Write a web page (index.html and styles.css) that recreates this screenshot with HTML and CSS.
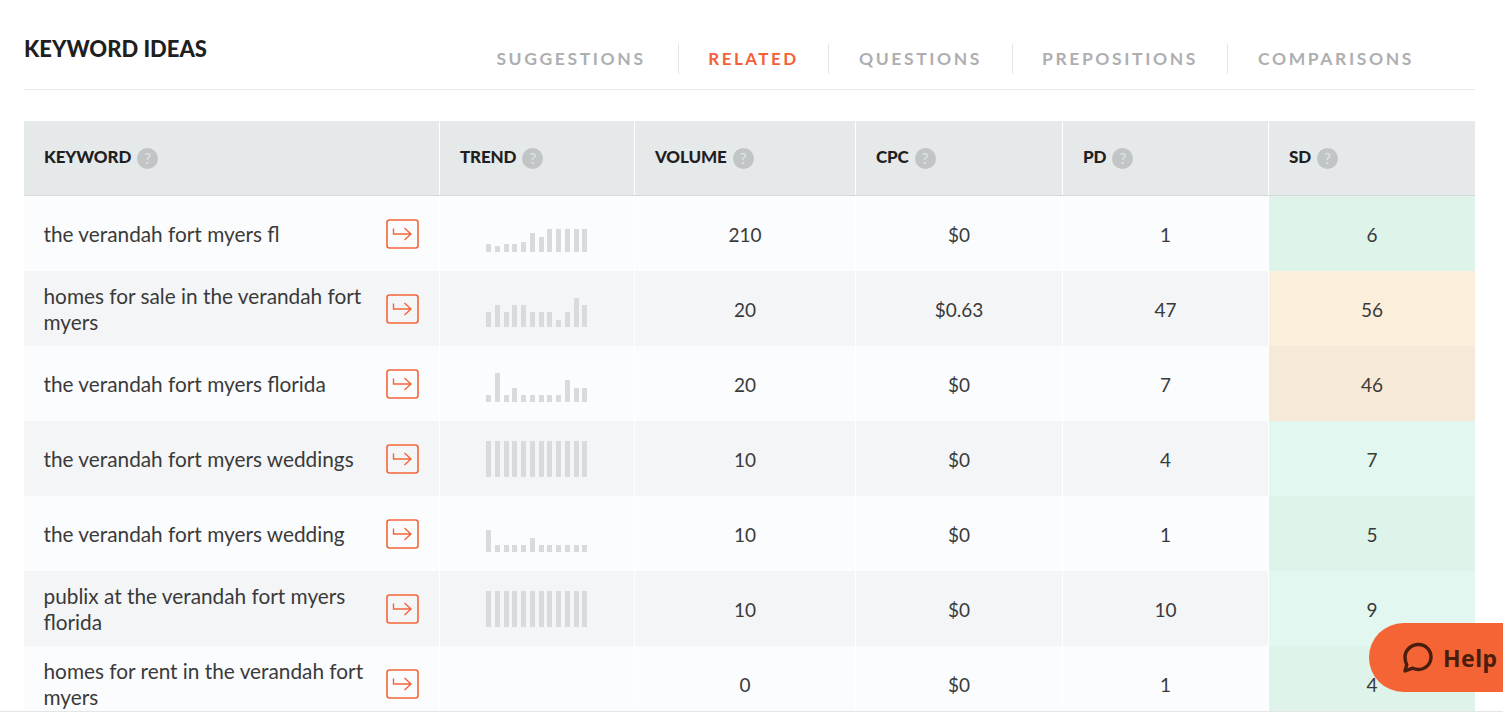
FILE: index.html
```html
<!DOCTYPE html>
<html lang="en">
<head>
<meta charset="utf-8">
<title>Keyword Ideas</title>
<link rel="stylesheet" href="styles.css">
</head>
<body>
<main class="page">
  <header class="top">
    <h1 class="title">KEYWORD IDEAS</h1>
    <nav class="tabs">
      <a class="tab">SUGGESTIONS</a>
      <a class="tab active">RELATED</a>
      <a class="tab">QUESTIONS</a>
      <a class="tab">PREPOSITIONS</a>
      <a class="tab">COMPARISONS</a>
    </nav>
  </header>
  <div class="table">
    <div class="row head">
      <div class="cell kw">KEYWORD <span class="q">?</span></div>
      <div class="cell tr">TREND <span class="q">?</span></div>
      <div class="cell">VOLUME <span class="q">?</span></div>
      <div class="cell">CPC <span class="q">?</span></div>
      <div class="cell">PD <span class="q">?</span></div>
      <div class="cell">SD <span class="q">?</span></div>
    </div>

    <div class="row">
      <div class="cell kw"><span class="kwt">the verandah fort myers fl</span><svg class="go" viewBox="0 0 33 30"><rect x="1" y="1" width="31" height="28" rx="2.5"/><path d="M7.500 9.500V15H25M18.500 9l6.500 6-6.500 6"/></svg></div>
      <div class="cell bars"><i style="height:8px"></i><i style="height:6px"></i><i style="height:8px"></i><i style="height:8px"></i><i style="height:10px"></i><i style="height:19px"></i><i style="height:15px"></i><i style="height:23px"></i><i style="height:23px"></i><i style="height:23px"></i><i style="height:23px"></i><i style="height:23px"></i></div>
      <div class="cell num">210</div><div class="cell num">$0</div><div class="cell num">1</div><div class="cell num sd g1">6</div>
    </div>

    <div class="row">
      <div class="cell kw"><span class="kwt">homes for sale in the verandah fort myers</span><svg class="go" viewBox="0 0 33 30"><rect x="1" y="1" width="31" height="28" rx="2.5"/><path d="M7.500 9.500V15H25M18.500 9l6.500 6-6.500 6"/></svg></div>
      <div class="cell bars"><i style="height:15px"></i><i style="height:22px"></i><i style="height:15px"></i><i style="height:22px"></i><i style="height:22px"></i><i style="height:15px"></i><i style="height:15px"></i><i style="height:15px"></i><i style="height:7px"></i><i style="height:15px"></i><i style="height:29px"></i><i style="height:22px"></i></div>
      <div class="cell num">20</div><div class="cell num">$0.63</div><div class="cell num">47</div><div class="cell num sd o1">56</div>
    </div>

    <div class="row">
      <div class="cell kw"><span class="kwt">the verandah fort myers florida</span><svg class="go" viewBox="0 0 33 30"><rect x="1" y="1" width="31" height="28" rx="2.5"/><path d="M7.500 9.500V15H25M18.500 9l6.500 6-6.500 6"/></svg></div>
      <div class="cell bars"><i style="height:7px"></i><i style="height:29px"></i><i style="height:7px"></i><i style="height:14px"></i><i style="height:7px"></i><i style="height:7px"></i><i style="height:7px"></i><i style="height:7px"></i><i style="height:7px"></i><i style="height:22px"></i><i style="height:14px"></i><i style="height:14px"></i></div>
      <div class="cell num">20</div><div class="cell num">$0</div><div class="cell num">7</div><div class="cell num sd o2">46</div>
    </div>

    <div class="row">
      <div class="cell kw"><span class="kwt">the verandah fort myers weddings</span><svg class="go" viewBox="0 0 33 30"><rect x="1" y="1" width="31" height="28" rx="2.5"/><path d="M7.500 9.500V15H25M18.500 9l6.500 6-6.500 6"/></svg></div>
      <div class="cell bars"><i style="height:36px"></i><i style="height:36px"></i><i style="height:36px"></i><i style="height:36px"></i><i style="height:36px"></i><i style="height:36px"></i><i style="height:36px"></i><i style="height:36px"></i><i style="height:36px"></i><i style="height:36px"></i><i style="height:36px"></i><i style="height:36px"></i></div>
      <div class="cell num">10</div><div class="cell num">$0</div><div class="cell num">4</div><div class="cell num sd g2">7</div>
    </div>

    <div class="row">
      <div class="cell kw"><span class="kwt">the verandah fort myers wedding</span><svg class="go" viewBox="0 0 33 30"><rect x="1" y="1" width="31" height="28" rx="2.5"/><path d="M7.500 9.500V15H25M18.500 9l6.500 6-6.500 6"/></svg></div>
      <div class="cell bars"><i style="height:22px"></i><i style="height:7px"></i><i style="height:7px"></i><i style="height:7px"></i><i style="height:7px"></i><i style="height:14px"></i><i style="height:7px"></i><i style="height:7px"></i><i style="height:7px"></i><i style="height:7px"></i><i style="height:7px"></i><i style="height:7px"></i></div>
      <div class="cell num">10</div><div class="cell num">$0</div><div class="cell num">1</div><div class="cell num sd g1">5</div>
    </div>

    <div class="row">
      <div class="cell kw"><span class="kwt">publix at the verandah fort myers florida</span><svg class="go" viewBox="0 0 33 30"><rect x="1" y="1" width="31" height="28" rx="2.5"/><path d="M7.500 9.500V15H25M18.500 9l6.500 6-6.500 6"/></svg></div>
      <div class="cell bars"><i style="height:36px"></i><i style="height:36px"></i><i style="height:36px"></i><i style="height:36px"></i><i style="height:36px"></i><i style="height:36px"></i><i style="height:36px"></i><i style="height:36px"></i><i style="height:36px"></i><i style="height:36px"></i><i style="height:36px"></i><i style="height:36px"></i></div>
      <div class="cell num">10</div><div class="cell num">$0</div><div class="cell num">10</div><div class="cell num sd g2">9</div>
    </div>

    <div class="row">
      <div class="cell kw"><span class="kwt">homes for rent in the verandah fort myers</span><svg class="go" viewBox="0 0 33 30"><rect x="1" y="1" width="31" height="28" rx="2.5"/><path d="M7.500 9.500V15H25M18.500 9l6.500 6-6.500 6"/></svg></div>
      <div class="cell bars"></div>
      <div class="cell num">0</div><div class="cell num">$0</div><div class="cell num">1</div><div class="cell num sd g1">4</div>
    </div>
  </div>
</main>
<button class="help"><svg class="help-i" viewBox="0 0 32 32"><path d="M16.500 2.500c7 0 12.500 5.500 12.500 12.500S23.500 27.500 16.500 27.500c-2 0-4-.5-5.700-1.300L3 29l1.800-6.500C3.500 20.300 3 17.700 3 15 3 8 9.500 2.500 16.500 2.500z"/></svg><span>Help</span></button>
</body>
</html>
```
FILE: styles.css
```css
* { box-sizing: border-box; }
html, body { margin: 0; padding: 0; height: 712px; overflow: hidden; background: #fff; }
body { font-family: "Lato", "Liberation Sans", sans-serif; color: #2b2b2b; }
.page { height: 712px; overflow: hidden; padding: 0 28px 0 24px; border-bottom: 1px solid #e4e5e5; }
.top { height: 90px; display: flex; border-bottom: 1px solid #e6e8ea; }
.title { margin: 37px 0 0; font-size: 22px; line-height: 24px; font-weight: 900; color: #1f1f1f; }
.tabs { display: grid; grid-template-columns: 214px 150px 184px 215px 217px; margin-left: 257px; margin-top: 44px; height: 30px; }
.tab { font-size: 17.500px; line-height: 30px; font-weight: 700; letter-spacing: 2.6px; color: #aeafb1; text-align: center; border-left: 1px solid #e3e5ea; white-space: nowrap; }
.tab:first-child { border-left: 0; }
.tab.active { color: #f4603a; font-size: 17px; letter-spacing: 2.5px; }
.table { margin-top: 31px; }
.row { display: grid; grid-template-columns: 416px 195px 221px 207px 206px 206px; height: 75px; background: #fbfcfe; }
.row:nth-child(odd) { background: #f4f5f7; }
.row.head { height: 75px; background: #e6e9e9; border-bottom: 1px solid #d5d8d9; }
.cell { border-right: 1px solid #fff; display: flex; align-items: center; }
.cell:last-child { border-right: 0; }
.head .cell { font-size: 17px; font-weight: 900; letter-spacing: -0.15px; color: #1f1f1f; padding: 0 0 4px 20px; gap: 6px; }
.q { width: 21px; height: 21px; border-radius: 50%; background: #c2c5c6; color: #e3e5e6; font-size: 15px; font-weight: 400; letter-spacing: 0; display: flex; align-items: center; justify-content: center; margin-top: 4px; }
.kw { padding: 0 20px 0 19.500px; justify-content: space-between; }
.head .kw { justify-content: flex-start; }
.kwt { width: 330px; font-size: 20.800px; line-height: 26px; color: #3a3a3a; font-weight: 400; }
.go { width: 33px; height: 30px; flex: none; fill: none; stroke: #f4653a; stroke-width: 1.6; }
.go path { stroke-width: 1.4; }
.bars { align-items: flex-end; padding: 0 0 19px 46px; gap: 3.750px; }
.bars i { display: block; width: 5px; background: #d9dadb; }
.num { justify-content: center; padding-top: 2px; font-size: 19px; color: #3a3a3a; }
.g1 { background: #def3ea; }
.g2 { background: #e1f7ef; }
.o1 { background: #fbefdc; }
.o2 { background: #f6e9d7; }
.help { position: fixed; left: 1369px; top: 623px; width: 134px; height: 69px; border: 0; padding: 0 0 0 33px; border-radius: 35px 0 0 35px; background: #f46434; color: #4a1e0e; display: flex; align-items: center; gap: 9px; font-family: "Noto Sans", sans-serif; font-size: 23px; font-weight: 700; letter-spacing: .4px; }
.help-i { width: 32px; height: 32px; fill: none; stroke: #4a1e0e; stroke-width: 3.4; stroke-linejoin: round; flex: none; }
```
